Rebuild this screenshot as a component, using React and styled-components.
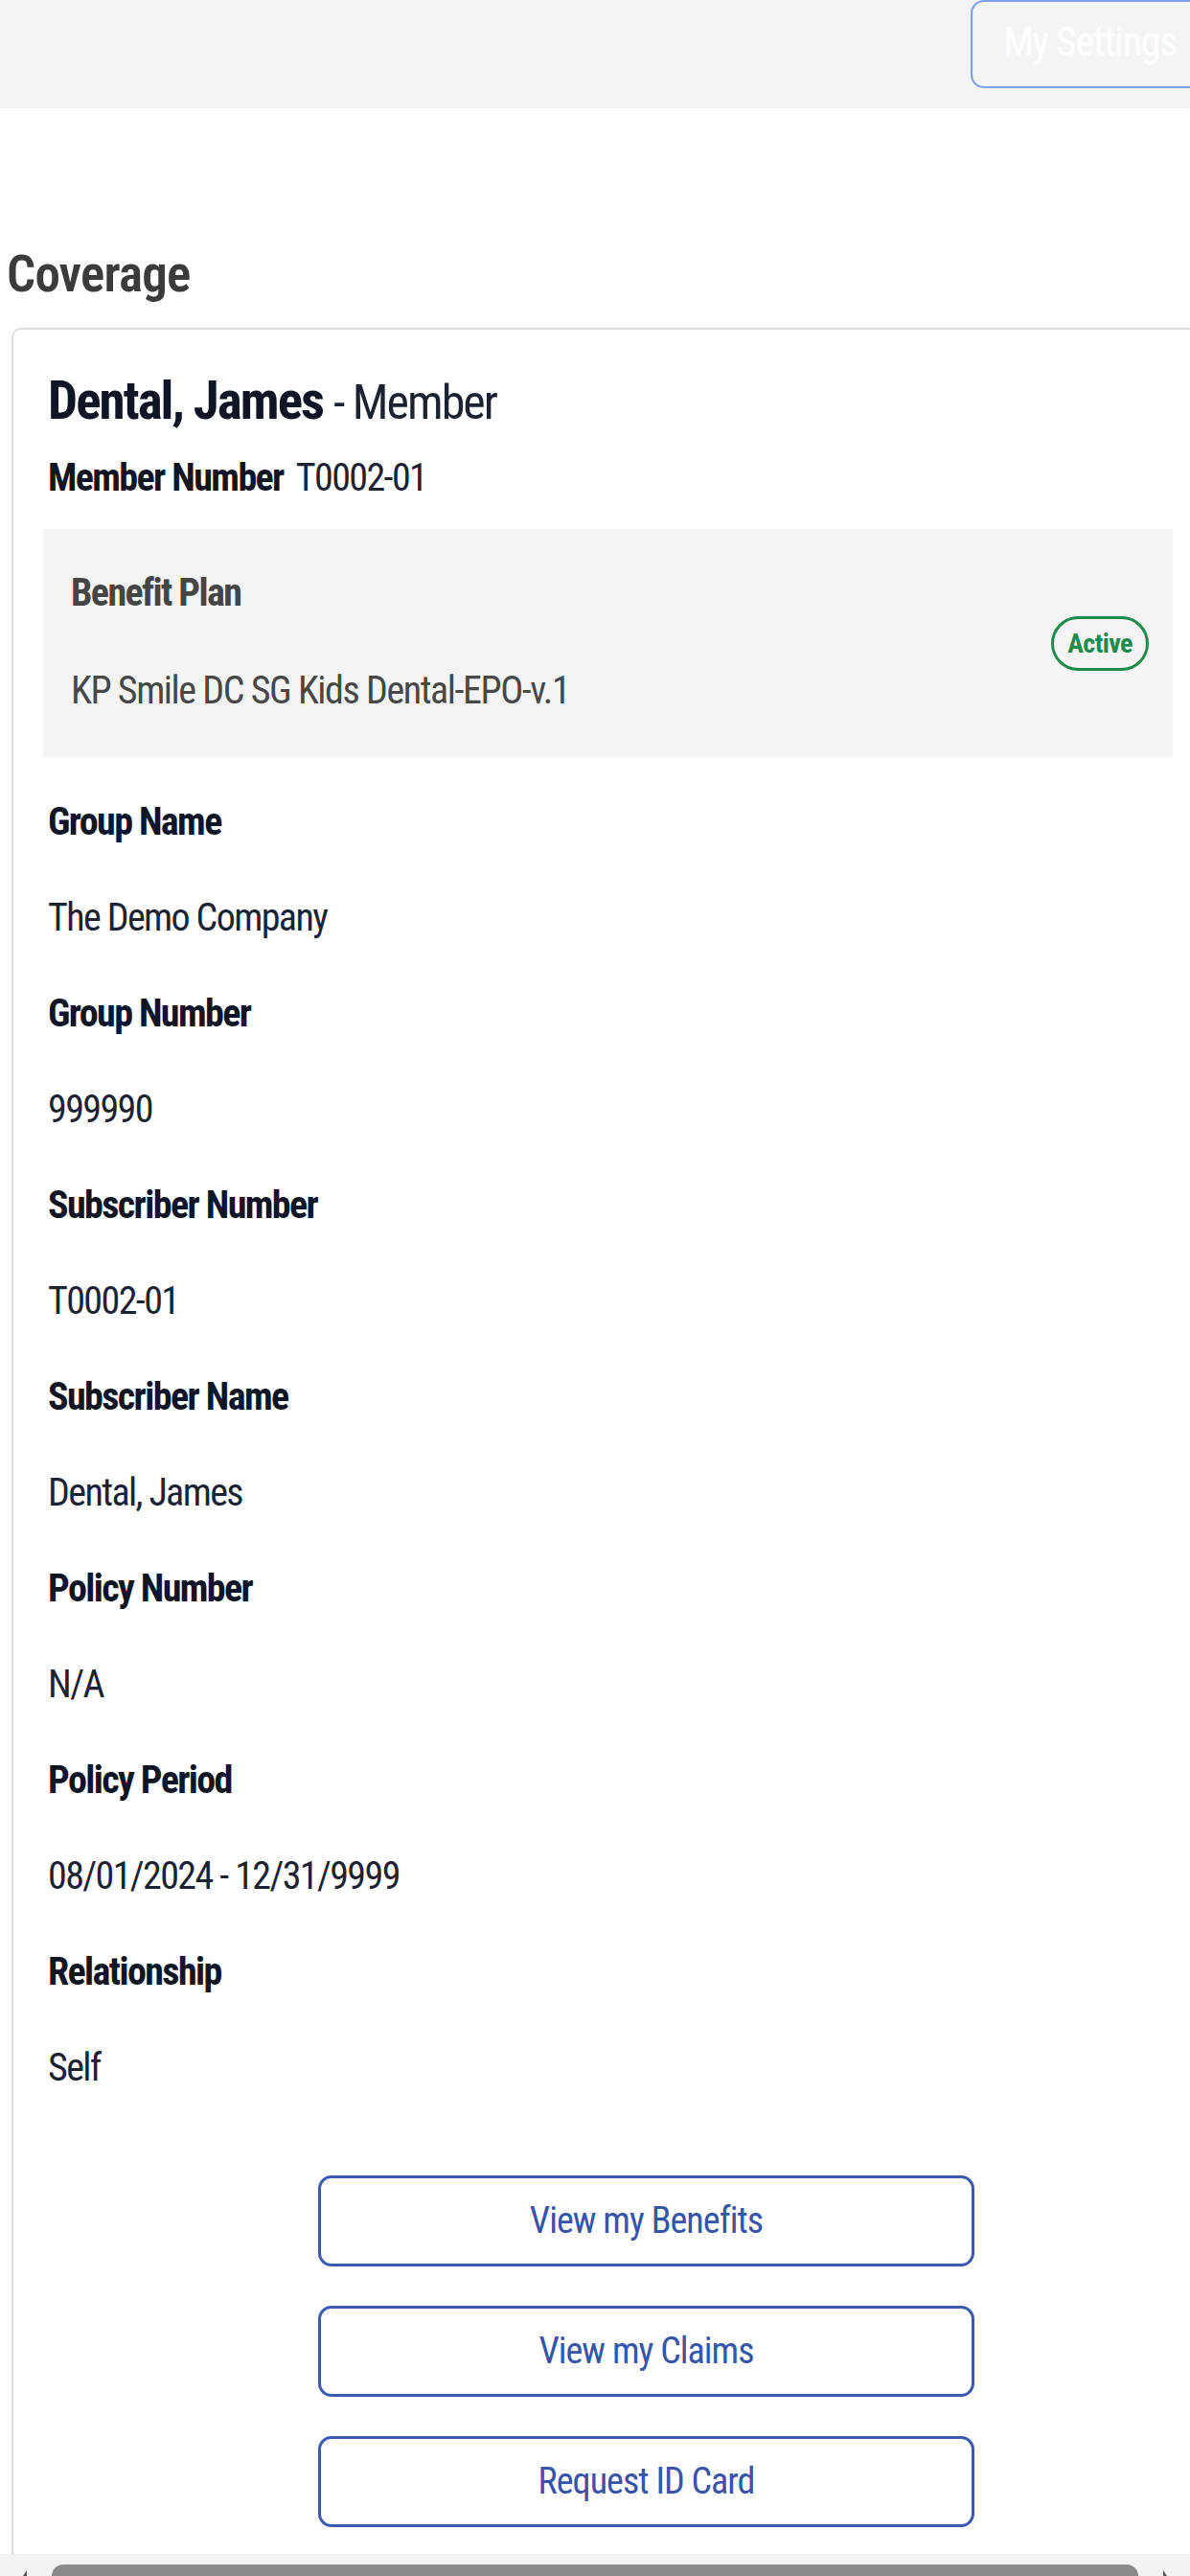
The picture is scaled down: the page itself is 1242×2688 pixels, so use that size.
import React from "react";
import styled, { createGlobalStyle } from "styled-components";

const GlobalStyle = createGlobalStyle`
  html, body {
    margin: 0;
    padding: 0;
    background: #ffffff;
    overflow: hidden;
  }
  body {
    font-family: Roboto, "Liberation Sans", Arial, sans-serif;
    font-stretch: 75%;
    -webkit-font-smoothing: antialiased;
  }
  * { box-sizing: border-box; }
`;

const Page = styled.div`
  width: 1290px;
  height: 2688px;
  display: flex;
  flex-direction: column;
  background: #ffffff;
`;

const TopBar = styled.header`
  height: 113px;
  flex: none;
  background: #f4f4f4;
  display: flex;
  justify-content: flex-end;
  align-items: flex-start;
  padding-right: 17px;
`;

const SettingsButton = styled.button`
  width: 260px;
  height: 92px;
  border: 2px solid #7f9ff0;
  border-radius: 14px;
  background: transparent;
  color: #ffffff;
  font-family: inherit;
  font-stretch: 75%;
  font-size: 42px;
  font-weight: 400;
  letter-spacing: -0.03em;
  text-align: left;
  padding: 0 0 6px 32px;
`;

const Main = styled.main`
  flex: 1;
  display: flex;
  flex-direction: column;
  padding: 142px 33px 0 12px;
`;

const Title = styled.h1`
  margin: 0 0 23px -5px;
  font-size: 53px;
  line-height: 1.2;
  font-weight: 600;
  letter-spacing: -0.015em;
  color: #3b3b3b;
`;

const Card = styled.section`
  border: 2px solid #dedede;
  border-radius: 10px 10px 0 0;
  border-bottom: none;
  box-shadow: 0 2px 6px rgba(0, 0, 0, 0.06);
  padding: 41px 31px 28px 31px;
  display: flex;
  flex-direction: column;
  flex: 1;
`;

const MemberHead = styled.div`
  padding-left: 5px;
  display: flex;
  flex-direction: column;
  gap: 24px;
`;

const Name = styled.h2`
  margin: 0;
  font-size: 55px;
  line-height: 1.2;
  font-weight: 700;
  letter-spacing: -0.035em;
  color: #0f1524;
`;

const Role = styled.span`
  font-size: 50px;
  font-weight: 400;
  letter-spacing: -0.04em;
  color: #1b2333;
`;

const MemberNo = styled.div`
  font-size: 40px;
  line-height: 1.2;
  letter-spacing: -0.04em;
  color: #1b2333;
`;

const Strong = styled.span`
  font-weight: 700;
  color: #0f1524;
  margin-right: 13px;
`;

const PlanBox = styled.div`
  margin-top: 29px;
  background: #f4f4f4;
  padding: 43px 25px 45px 29px;
  display: flex;
  align-items: center;
  justify-content: space-between;
`;

const PlanText = styled.div`
  display: flex;
  flex-direction: column;
  gap: 54px;
`;

const PlanLabel = styled.div`
  font-size: 40px;
  line-height: 1.2;
  font-weight: 700;
  letter-spacing: -0.04em;
  color: #454545;
`;

const PlanValue = styled.div`
  font-size: 40px;
  line-height: 1.2;
  letter-spacing: -0.036em;
  color: #474747;
`;

const StatusPill = styled.span`
  display: inline-flex;
  align-items: center;
  justify-content: center;
  width: 102px;
  height: 57px;
  margin-top: 4px;
  border: 3px solid #1f8a4d;
  border-radius: 29px;
  color: #1f8a4d;
  font-size: 28px;
  font-weight: 700;
  letter-spacing: -0.02em;
`;

const Fields = styled.dl`
  margin: 18px 0 0 0;
  padding-left: 5px;
  display: flex;
  flex-direction: column;
`;

const FieldLabel = styled.dt`
  font-size: 40px;
  line-height: 100px;
  font-weight: 700;
  letter-spacing: -0.04em;
  color: #0f1524;
`;

const FieldValue = styled.dd`
  margin: 0;
  font-size: 40px;
  line-height: 100px;
  letter-spacing: -0.04em;
  color: #1b2333;
`;

const Actions = styled.div`
  margin-top: 62px;
  padding-left: 287px;
  display: flex;
  flex-direction: column;
  gap: 41px;
`;

const ActionButton = styled.button`
  width: 685px;
  height: 95px;
  border: 3px solid #3b5bb1;
  border-radius: 14px;
  background: #ffffff;
  color: #3654a8;
  font-family: inherit;
  font-stretch: 75%;
  font-size: 38px;
  font-weight: 400;
  letter-spacing: -0.025em;
`;

const ScrollTrack = styled.div`
  height: 26px;
  flex: none;
  background: #f3f3f3;
  display: flex;
  align-items: flex-start;
  padding: 11px 0 0 14px;
  gap: 20px;
`;

const Arrow = styled.svg`
  width: 20px;
  height: 20px;
  flex: none;
  margin-top: 4px;
`;

const Thumb = styled.div`
  width: 1134px;
  height: 40px;
  background: #8a8a8a;
  border-radius: 12px 12px 0 0;
`;

const fields = [
  ["Group Name", "The Demo Company"],
  ["Group Number", "999990"],
  ["Subscriber Number", "T0002-01"],
  ["Subscriber Name", "Dental, James"],
  ["Policy Number", "N/A"],
  ["Policy Period", "08/01/2024 - 12/31/9999"],
  ["Relationship", "Self"],
];

const actions = ["View my Benefits", "View my Claims", "Request ID Card"];

export default function App() {
  return (
    <>
      <GlobalStyle />
      <Page>
        <TopBar>
          <SettingsButton>My Settings</SettingsButton>
        </TopBar>
        <Main>
          <Title>Coverage</Title>
          <Card>
            <MemberHead>
              <Name>
                Dental, James <Role>- Member</Role>
              </Name>
              <MemberNo>
                <Strong>Member Number</Strong>T0002-01
              </MemberNo>
            </MemberHead>
            <PlanBox>
              <PlanText>
                <PlanLabel>Benefit Plan</PlanLabel>
                <PlanValue>KP Smile DC SG Kids Dental-EPO-v.1</PlanValue>
              </PlanText>
              <StatusPill>Active</StatusPill>
            </PlanBox>
            <Fields>
              {fields.map(([label, value]) => (
                <React.Fragment key={label}>
                  <FieldLabel>{label}</FieldLabel>
                  <FieldValue>{value}</FieldValue>
                </React.Fragment>
              ))}
            </Fields>
            <Actions>
              {actions.map((a) => (
                <ActionButton key={a}>{a}</ActionButton>
              ))}
            </Actions>
          </Card>
        </Main>
        <ScrollTrack>
          <Arrow viewBox="0 0 20 20">
            <path d="M14 2 L6 14 L14 20 Z" fill="#555" />
          </Arrow>
          <Thumb />
          <Arrow viewBox="0 0 20 20">
            <path d="M6 2 L14 14 L6 20 Z" fill="#555" />
          </Arrow>
        </ScrollTrack>
      </Page>
    </>
  );
}
